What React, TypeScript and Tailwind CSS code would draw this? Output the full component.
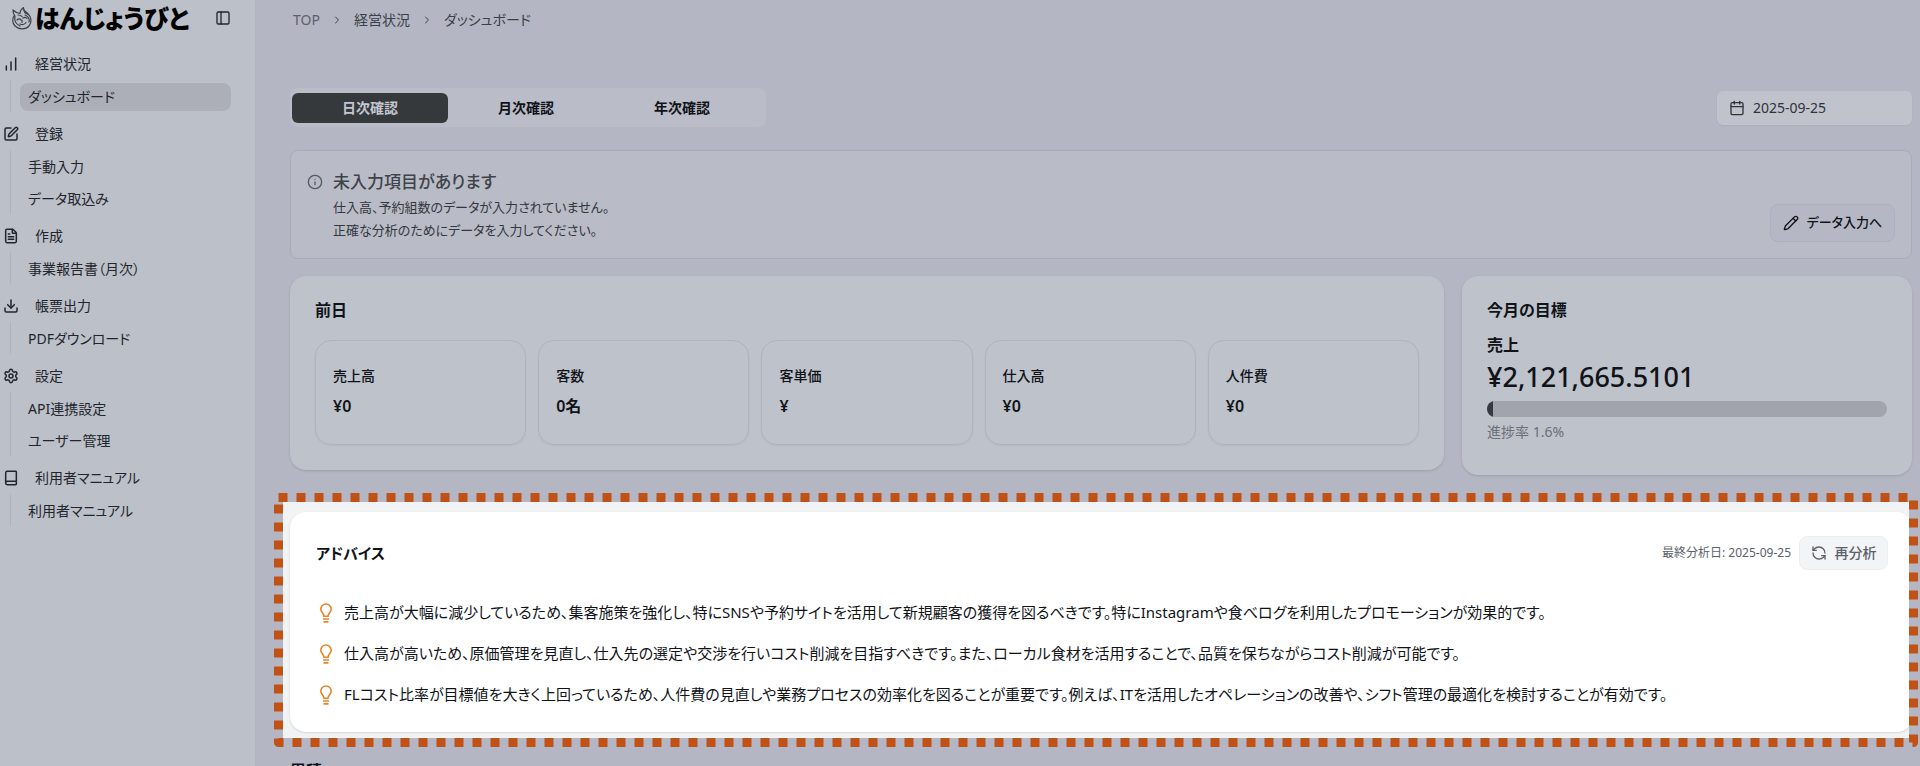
import { useState } from "react";
import {
    Book,
    Calendar,
    ChartNoAxesColumnIncreasing,
    ChevronRight,
    Download,
    FileText,
    Info,
    PanelLeft,
    Pencil,
    RefreshCcw,
    Settings,
    SquarePen,
} from "lucide-react";
import type { LucideIcon } from "lucide-react";

interface MenuGroup {
    label: string;
    icon: LucideIcon;
    items: string[];
}

const menu: MenuGroup[] = [
    { label: "経営状況", icon: ChartNoAxesColumnIncreasing, items: ["ダッシュボード"] },
    { label: "登録", icon: SquarePen, items: ["手動入力", "データ取込み"] },
    { label: "作成", icon: FileText, items: ["事業報告書（月次）"] },
    { label: "帳票出力", icon: Download, items: ["PDFダウンロード"] },
    { label: "設定", icon: Settings, items: ["API連携設定", "ユーザー管理"] },
    { label: "利用者マニュアル", icon: Book, items: ["利用者マニュアル"] },
];

const tabs = ["日次確認", "月次確認", "年次確認"];

const stats = [
    { label: "売上高", value: "¥0" },
    { label: "客数", value: "0名" },
    { label: "客単価", value: "¥" },
    { label: "仕入高", value: "¥0" },
    { label: "人件費", value: "¥0" },
];

const advices = [
    "売上高が大幅に減少しているため、集客施策を強化し、特にSNSや予約サイトを活用して新規顧客の獲得を図るべきです。特にInstagramや食べログを利用したプロモーションが効果的です。",
    "仕入高が高いため、原価管理を見直し、仕入先の選定や交渉を行いコスト削減を目指すべきです。また、ローカル食材を活用することで、品質を保ちながらコスト削減が可能です。",
    "FLコスト比率が目標値を大きく上回っているため、人件費の見直しや業務プロセスの効率化を図ることが重要です。例えば、ITを活用したオペレーションの改善や、シフト管理の最適化を検討することが有効です。",
];

const progress = 1.6;

function LogoMark() {
    return (
        <svg viewBox="0 0 22 24" className="h-6 w-[22px] shrink-0 text-[#3d4048]" fill="none" stroke="currentColor" strokeWidth="1.2" strokeLinecap="round" strokeLinejoin="round">
            <path d="M2 4c0 3 .5 4 1.500 5.500C1 12 1 17 4 20c4 4 11 3.500 14 0 3-3.500 2.500-9-.500-11.500C16 7.500 14 7.500 13.500 6 13 4.500 12.500 3 12.500 1.500 10.500 3 9 5 9 7.500 6 7 4 6 2 4Z" />
            <path d="M4 10c-1 4 1 8 5 10M7 9c2 0 3 .5 4 1.500M14 9c3 1 5 4 4 7M6 14c1.500-1.500 3-1.500 4 0M12 12c1.500-1 3-1 4 .5M9 18c2 1 4.500.5 6-1.500M11 14v2.500M13 4c1 2 3 2 4 4" />
        </svg>
    );
}

function BulbIcon() {
    return (
        <svg viewBox="0 0 16 20" className="h-5 w-4 shrink-0 text-[#e58427]" fill="none" stroke="currentColor" strokeWidth="1.6">
            <path d="M6 13.200C6 10.500 2.800 9.500 2.800 6.200a5.200 5.200 0 0 1 10.400 0c0 3.300-3.200 4.300-3.200 7Z" />
            <path d="M5 16h6M5.500 18.900h5" />
        </svg>
    );
}

function Sidebar() {
    return (
        <aside className="w-64 shrink-0 border-r border-[#b2b5c0] bg-[#bcc0c9] text-[#22262c]">
            <div className="flex h-9 items-center pl-[11px]">
                <LogoMark />
                <span className="ml-0.5 flex-1 text-[25px] leading-9 font-black text-black">はんじょうびと</span>
                <button aria-label="サイドバー切替" className="mr-6">
                    <PanelLeft size={16} />
                </button>
            </div>
            <nav className="mt-3 flex flex-col gap-1.5 text-sm">
                {menu.map((group) => (
                    <div key={group.label}>
                        <div className="flex h-8 items-center gap-4 pl-[3px]">
                            <group.icon size={16} strokeWidth={2.25} />
                            <span>{group.label}</span>
                        </div>
                        <ul className="ml-2.5 flex flex-col gap-1 border-l border-[#b0b3bd] pt-[3px] pb-px pr-6 pl-[9px]">
                            {group.items.map((item) => (
                                <li key={item}>
                                    <a
                                        href="#"
                                        className={`flex h-7 items-center rounded-lg pl-2 ${item === "ダッシュボード" ? "bg-[#acafb8]" : ""}`}
                                    >
                                        {item}
                                    </a>
                                </li>
                            ))}
                        </ul>
                    </div>
                ))}
            </nav>
        </aside>
    );
}

export default function App() {
    const [activeTab, setActiveTab] = useState("日次確認");

    return (
        <div className="flex h-screen overflow-hidden bg-[#b4b7c3] font-['Noto_Sans','Noto_Sans_CJK_JP',sans-serif] text-[#101318] [font-feature-settings:'palt']">
            <Sidebar />
            <main className="min-w-0 flex-1 pr-2 pl-[34px]">
                {/* Breadcrumbs */}
                <nav className="mt-2 flex h-6 items-center gap-[11px] pl-[3px] text-sm text-[#3b3f47]">
                    <a href="#" className="text-[#5d616b]">TOP</a>
                    <ChevronRight size={12} />
                    <a href="#">経営状況</a>
                    <ChevronRight size={12} />
                    <span>ダッシュボード</span>
                </nav>

                <div className="mt-14 flex items-center justify-between">
                    <div className="flex h-[39px] w-[476px] items-center rounded-lg bg-[#babdc7] px-0.5">
                        {tabs.map((tab) => (
                            <button
                                key={tab}
                                onClick={() => setActiveTab(tab)}
                                className={`h-[30px] w-[156px] rounded-md text-sm font-semibold ${activeTab === tab ? "bg-[#36393c] text-[#c3c6cf]" : ""}`}
                            >
                                {tab}
                            </button>
                        ))}
                    </div>
                    <button className="flex h-[34px] w-[195px] items-center gap-2 rounded-md bg-[#c0c3cc] pl-3 text-sm text-[#2f333a] shadow-xs">
                        <Calendar size={16} /> 2025-09-25
                    </button>
                </div>

                {/* Missing input notice */}
                <section className="mt-[23px] flex items-end justify-between rounded-lg border border-[#a9acb7] bg-[#b9bcc6] px-4 pt-[17px] pb-4">
                    <div className="flex gap-2.5 text-[#33373e]">
                        <Info size={16} className="mt-1.5 text-[#555962]" />
                        <div>
                            <h2 className="text-[17px] leading-7 font-medium text-[#3f434a]">未入力項目があります</h2>
                            <p className="text-[13px] leading-[23px]">
                                仕入高、予約組数のデータが入力されていません。
                                <br />
                                正確な分析のためにデータを入力してください。
                            </p>
                        </div>
                    </div>
                    <button className="flex h-[38px] w-[125px] items-center justify-center gap-2 rounded-lg border border-[#aeb1bd] bg-[#b5b8c4] text-[13px] font-medium">
                        <Pencil size={16} /> データ入力へ
                    </button>
                </section>

                <div className="mt-[17px] flex items-start gap-[18px]">
                    <section className="h-[194px] min-w-0 flex-1 rounded-2xl bg-[#bec2cb] px-[25px] pt-[22px] shadow-sm">
                        <h2 className="text-base font-semibold">前日</h2>
                        <div className="mt-[18px] grid grid-cols-5 gap-3">
                            {stats.map((stat) => (
                                <div key={stat.label} className="h-[105px] rounded-2xl border border-[#b0b3bd] px-[17px] pt-[25px] shadow-xs">
                                    <p className="text-sm font-medium">{stat.label}</p>
                                    <p className="mt-2 text-base font-semibold">{stat.value}</p>
                                </div>
                            ))}
                        </div>
                    </section>
                    <section className="h-[199px] w-[450px] shrink-0 rounded-2xl bg-[#bec2cb] px-[25px] pt-[22px] shadow-sm">
                        <h2 className="text-base font-semibold">今月の目標</h2>
                        <h3 className="mt-[11px] text-base font-semibold">売上</h3>
                        <p className="text-[27px] leading-10 font-medium">¥2,121,665.5101</p>
                        <div className="mt-1 h-4 overflow-hidden rounded-full bg-[#a1a4ac]">
                            <div className="h-full bg-[#36393f]" style={{ width: `${progress}%` }} />
                        </div>
                        <p className="mt-[5px] text-sm text-[#6b6f79]">進捗率 {progress}%</p>
                    </section>
                </div>

                {/* Highlighted advice area */}
                <div className="relative mt-[18px] -mr-1.5 -ml-4 p-[9px]">
                    <svg className="absolute inset-0 h-full w-full" fill="none" stroke="#c05216" strokeWidth="9" strokeDasharray="9 9" strokeLinejoin="round">
                        <rect className="h-[calc(100%-9px)] w-[calc(100%-9px)]" x="4.5" y="4.5" />
                    </svg>
                    <div className="relative overflow-hidden bg-[#f1f3f4] pt-2.5 pb-1.5 pl-[7px]">
                        <section className="-mr-1 h-[220px] rounded-2xl bg-white pr-[25px] pl-[26px] shadow-sm">
                            <div className="flex items-center justify-between pt-6">
                                <h2 className="text-[15px] font-semibold">アドバイス</h2>
                                <div className="flex items-center gap-2">
                                    <span className="text-xs text-[#5b616b]">最終分析日: 2025-09-25</span>
                                    <button className="flex h-[34px] w-[89px] items-center justify-center gap-2 rounded-lg border border-[#eceef0] bg-[#f3f4f6] text-sm font-medium text-[#5b616b]">
                                        <RefreshCcw size={16} /> 再分析
                                    </button>
                                </div>
                            </div>
                            <ul className="mt-[22px] flex flex-col pl-0.5 text-[15px]">
                                {advices.map((text) => (
                                    <li key={text} className="flex h-[41px] items-center gap-2.5 whitespace-nowrap">
                                        <BulbIcon />
                                        {text}
                                    </li>
                                ))}
                            </ul>
                        </section>
                    </div>
                </div>

                <h2 className="mt-3 text-base font-semibold">累積</h2>
            </main>
        </div>
    );
}
